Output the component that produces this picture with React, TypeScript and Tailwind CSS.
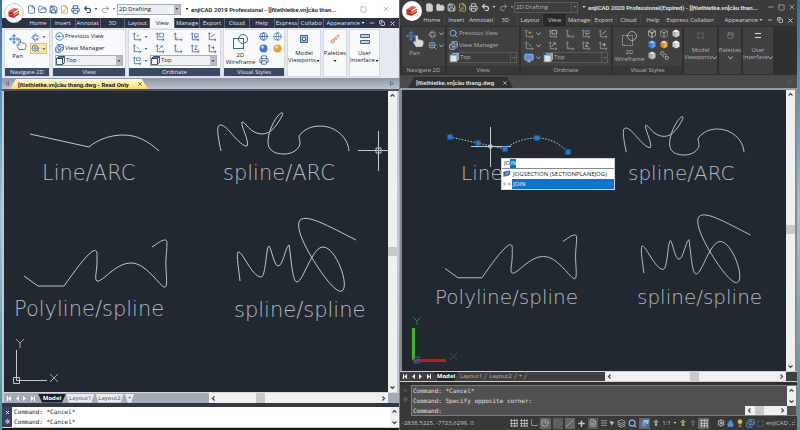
import React from "react";
import clsx from "clsx";
import {
    File, FolderOpen, Save, FilePen, Printer, Undo2, Redo2, Move, ZoomIn, CircleArrowLeft,
    Images, Minus, Square, X, Copy, Clock3, Settings, Lightbulb, Layers, Globe,
    MousePointer2, Search, Rotate3d, Lock, Monitor, PersonStanding, Maximize, Plus, SquareStack,
    Brush, PanelTop, FileText, Slash, Menu
} from "lucide-react";

type Theme = 'light' | 'dark';

interface ThemeProps {
    theme: Theme;
}

interface IconButtonProps {
    label: string;
    className?: string;
    children: React.ReactNode;
}

const IconButton: React.FC<IconButtonProps> = ({ label, className, children }) => (
    <button type="button" aria-label={label} className={clsx("flex shrink-0 items-center justify-center", className)}>
        {children}
    </button>
);

const Caret = () => (
    <svg width="4" height="2" viewBox="0 0 4 2" className="shrink-0"><path d="M.5 0h3L2 2z" fill="currentColor" /></svg>
);

const Chevron = () => (
    <svg width="5" height="4" viewBox="0 0 5 4" className="shrink-0"><path d="M.5.5l2 2.500 2-2.500" fill="none" stroke="currentColor" /></svg>
);

const DropMark: React.FC<ThemeProps> = ({ theme }) => theme === 'light' ? <Caret /> : <Chevron />;

const Logo: React.FC<ThemeProps> = ({ theme }) => (
    <div className={clsx(
        "absolute left-[2px] z-10 flex h-5 w-5 items-center justify-center rounded-full bg-white",
        theme === 'light' ? "top-[3px] border border-[#c3c7ce]" : "top-px"
    )}>
        <svg width="14" height="14" viewBox="0 0 14 14">
            <path d="M1.500 5.200L7 2l5 1-5.500 3.200z" fill="#ee5a3a" />
            <path d="M1.500 5.200l5 1v1.500L12 4.500v1.300L6.500 9l-5-1z" fill="#b92318" />
            <path d="M6.500 7.700L12 4.800v1.400L7 9z" fill="#e2452c" />
            <path d="M1.500 8l5 1L12 6.500v2L6.500 12l-5-1.500z" fill="#c92d1d" />
            <path d="M6.500 7.400L12 4.200M6.500 9.400l5.500-3" stroke="#fff" strokeWidth=".6" />
        </svg>
    </div>
);

/* Small coordinate system icons of the Ordinate panel */
const UcsIcon: React.FC<{ mark: string; color: string; theme: Theme }> = ({ mark, color, theme }) => (
    <svg width="10" height="10" viewBox="0 0 11 11" fill="none" stroke={theme === 'light' ? '#41658f' : '#9a9a9a'}>
        <path d="M2.500 1v7.500H10M1.200 2.500L2.500 1l1.300 1.500M8.500 7.200L10 8.500 8.500 9.800" strokeWidth=".9" />
        <path d={mark} stroke={color} />
    </svg>
);

const PanIcon: React.FC<ThemeProps> = ({ theme }) => (
    <span className="flex h-[17px]">
        <Move size={10} strokeWidth={2.5} className="text-[#3b86dd]" />
        <svg width="11" height="12" viewBox="0 0 11 12" className="-ml-[3px] mt-[4px]" fill={theme === 'light' ? '#ffffff' : '#dadada'} stroke={theme === 'light' ? '#41658f' : '#dadada'} strokeWidth=".8">
            <path d="M3 11.500L.8 7.500C.3 6.500 1.500 6 2.200 6.800L3 7.600V1.500C3 .5 4.500.5 4.500 1.500V5C5 4.300 6 4.500 6.200 5.200 7 4.600 8 5 8.100 5.800 9 5.300 10 5.800 10 6.800V9L9 11.500z" />
        </svg>
    </span>
);

const GridIcon = () => (
    <svg width="8" height="8" viewBox="0 0 8 8" stroke="currentColor" strokeWidth=".8"><path d="M1.500 0v8M4.500 0v8M7 0v8M0 1.500h8M0 4.500h8M0 7h8" /></svg>
);

const Ball: React.FC<{ color: string; shine: string }> = ({ color, shine }) => (
    <svg width="9" height="9" viewBox="0 0 9 9">
        <circle cx="4.500" cy="4.500" r="4" fill={color} />
        <circle cx="3.500" cy="3" r="1.800" fill={shine} />
    </svg>
);

const Cube: React.FC<{ top: string; left: string; right: string; stroke?: string }> = ({ top, left, right, stroke }) => (
    <svg width="8" height="9" viewBox="0 0 8 9" stroke={stroke ?? 'none'} strokeWidth=".7">
        <path d="M4 .5l3.500 1.700L4 4 .5 2.200z" fill={top} />
        <path d="M.5 2.200L4 4v4.500L.5 6.700z" fill={left} />
        <path d="M7.500 2.200L4 4v4.500l3.500-1.800z" fill={right} />
    </svg>
);

const Wireframe: React.FC<ThemeProps> = ({ theme }) => (
    <svg width="17" height="17" viewBox="0 0 17 17" fill="none" stroke={theme === 'light' ? '#41658f' : '#a5a5a5'}>
        <rect x="1.500" y="5.500" width="10" height="10" strokeDasharray={theme === 'light' ? undefined : '2 1'} />
        <circle cx="11" cy="6" r="4.500" />
    </svg>
);

const ViewCube: React.FC<ThemeProps> = ({ theme }) => (
    <svg width="9" height="9" viewBox="0 0 9 9" strokeWidth=".8" stroke={theme === 'light' ? '#1f3d66' : '#bbbbbb'}>
        <path d="M.5 2.500h6v6h-6z" fill={theme === 'light' ? '#ffffff' : '#e4e4e4'} />
        <path d="M.5 2.500l2-2h6l-2 2z" fill="#3b82d8" />
        <path d="M6.500 2.500l2-2v6l-2 2z" fill={theme === 'light' ? '#cfe0f5' : '#999999'} />
    </svg>
);

const tabs = {
    light: ['Home', 'Insert', 'Annotat', '3D', 'Layout', 'View', 'Manage', 'Export', 'Cloud', 'Help', 'Express', 'Collabo'],
    dark: ['Home', 'Insert', 'Annotati', '3D', 'Layout', 'View', 'Manage', 'Export', 'Cloud', 'Help', 'Express', 'Collabor.'],
};

const titles = {
    light: 'enjiCAD 2019 Professional - [[filethietke.vn]cầu than...',
    dark: 'enjiCAD 2020 Professional(Expired) - [[filethietke.vn]cầu than...',
};

const TitleBar: React.FC<ThemeProps> = ({ theme }) => {
    const light = theme === 'light';

    return (
        <div className={clsx("flex items-center pl-[25px] pr-px", light ? "h-[18px] bg-white text-[#222222]" : "h-[14px] bg-[#3b3b3b] text-[#e6e6e6]")}>
            <div className={clsx("flex shrink-0 items-center gap-[2px]", light ? "text-[#2b5b9b]" : "text-[#d0d0d0]")}>
                <IconButton label="New"><File size={9} fill={light ? 'none' : 'currentColor'} /></IconButton>
                <IconButton label="Open"><FolderOpen size={9} fill={light ? 'none' : 'currentColor'} /></IconButton>
                <IconButton label="Save"><Save size={9} strokeWidth={2.5} /></IconButton>
                <IconButton label="Save as" className="text-[#d9a03c]"><FilePen size={9} strokeWidth={2.5} /></IconButton>
                <IconButton label="Print"><Printer size={9} strokeWidth={2.5} /></IconButton>
                <IconButton label="Undo" className="gap-[2px] pl-px"><Undo2 size={9} strokeWidth={3} /><Caret /></IconButton>
                <IconButton label="Redo" className="gap-[2px] pl-px text-[#8d97a5]"><Redo2 size={9} strokeWidth={2.5} /><Caret /></IconButton>
            </div>
            <Combo theme={theme} label="Workspace" value="2D Drafting" className={clsx("w-16 shrink-0", light && "ml-px")} />
            <span className="ml-1 mr-[2px]"><Caret /></span>
            <h1 className="min-w-0 flex-1 overflow-hidden whitespace-nowrap font-['Roboto','Noto_Sans',sans-serif] text-[6px] font-semibold">{titles[theme]}</h1>
            <div className={clsx("flex shrink-0 items-center", light ? "gap-[15px] pr-[8px] text-[#9a9a9a]" : "gap-[3px] text-[#cccccc]")}>
                {!light && <IconButton label="Minimize"><Minus size={8} /></IconButton>}
                <IconButton label="Maximize"><Square size={7} /></IconButton>
                <IconButton label="Close"><X size={8} /></IconButton>
            </div>
        </div>
    );
}

const Combo: React.FC<{ theme: Theme; label: string; value: string; className?: string; children?: React.ReactNode }> = ({ theme, label, value, className, children }) => {
    const light = theme === 'light';

    return (
        <div className={clsx(
            "flex h-[11px] items-center border",
            light ? "border-[#a9adb5] bg-[#eef0f3] text-[#222222]" : "border-[#5a5a5a] bg-[#3e3e3e] text-[#b5b5b5]",
            className
        )}>
            {children}
            <select aria-label={label} className="h-full min-w-0 flex-1 appearance-none bg-transparent pl-px text-[6px] leading-[9px]">
                <option>{value}</option>
            </select>
            <span className={clsx("flex h-full w-[6px] items-center justify-center", light ? "bg-[#b9bcc2] text-[#444444]" : "border-l border-[#555555] text-[#777777]")}>
                <Caret />
            </span>
        </div>
    );
}

const RibbonTabs: React.FC<ThemeProps> = ({ theme }) => {
    const light = theme === 'light';

    return (
        <nav className={clsx("flex shrink-0 pl-6 text-[6px]", light ? "h-[10px] bg-[#2d3345] text-[#dfe3ec]" : "h-[12px] bg-[#3b3b3b] text-[#d4d4d4]")}>
            <div className={clsx("flex shrink-0", light ? "w-4/5" : "w-[79%] -ml-1")}>
                {tabs[theme].map((tab) => (
                    <button
                        key={tab}
                        type="button"
                        className={clsx(
                            "flex-1 basis-0 overflow-hidden whitespace-nowrap",
                            light ? "border-r border-[#596178]" : "border-r border-[#474747]",
                            tab === 'View' && (light ? "bg-[#f3f5f9] text-[#222222]" : "bg-[#292929]")
                        )}
                    >
                        {tab}
                    </button>
                ))}
            </div>
            <div className="flex flex-1 items-center justify-end gap-1 pr-[3px]">
                <button type="button" className="flex items-center gap-px">Appearance<Caret /></button>
                <IconButton label="Minimize drawing"><Minus size={6} strokeWidth={3} /></IconButton>
                <IconButton label="Restore drawing"><Copy size={6} strokeWidth={3} /></IconButton>
                <IconButton label="Close drawing"><X size={7} strokeWidth={3} /></IconButton>
            </div>
        </nav>
    );
}

interface PanelProps extends ThemeProps {
    name?: string;
    className?: string;
    children: React.ReactNode;
}

const Panel: React.FC<PanelProps> = ({ theme, name, className, children }) => {
    const light = theme === 'light';

    return (
        <section className={clsx("flex shrink-0 flex-col", light ? "border border-[#d3d8e2] bg-[#f8f9fb]" : "bg-[#414141]", className)}>
            <div className="flex min-h-0 flex-1">{children}</div>
            {name && (
                <h2 className={clsx("h-[8px] text-center text-[6px] leading-[8px]", light ? "bg-[#3b4963] text-[#e4e8f0]" : "bg-[#383838] text-[#b4b4b4]")}>
                    {name}
                </h2>
            )}
        </section>
    );
}

const marks = [
    ['M5 4h3M6.500 2.500v3', 'M4.500 1.500h5v4h-5z', 'M5 6L3.500 7.500', 'M5 2h4v3H5zM5 6.500h3', 'M4 6l5-4'],
    ['M5 3l3 3', 'M4 6l4-4M6 2h2v2', 'M5 6L4 7', 'M5 2h3L5 6h3', 'M4.500 4h4M7 2v4'],
];

const markColor = (theme: Theme, row: number, col: number) => {
    if (row + col === 0) {
        return '#e3992e';
    }
    if (theme === 'light') {
        return '#4a86d0';
    }
    return row === 0 && col === 3 ? '#5f9fe6' : '#b5b5b5';
}

const Ribbon: React.FC<ThemeProps> = ({ theme }) => {
    const light = theme === 'light';
    const accent = light ? 'text-[#3b6db3]' : 'text-[#a9a9a9]';

    return (
        <div className={clsx("flex shrink-0 gap-[2px] pl-[2px] text-[6px] leading-[7px]", light ? "h-[50px] bg-[#e6e9f0] py-px text-[#222222]" : "h-[49px] bg-[#303030] py-px text-[#b4b4b4]")}>
            <Panel theme={theme} name="Navigate 2D" className={light ? "w-[46px]" : "w-[43px]"}>
                <button type="button" className="flex w-[25px] flex-col items-center pt-1">
                    <PanIcon theme={theme} />
                    <span className="mt-[2px]">Pan</span>
                </button>
                <div className={clsx("flex flex-col gap-px pt-[2px]", accent)}>
                    <IconButton label="Orbit" className="h-[10px] w-[17px] gap-[2px]"><Rotate3d size={9} /><DropMark theme={theme} /></IconButton>
                    <IconButton label="Zoom" className={clsx("h-[11px] w-[17px] gap-[2px]", light && "border border-[#e3c26a] bg-[#fbe6a5]")}><ZoomIn size={9} strokeWidth={2.5} className={light ? "text-[#3b78cc]" : "text-[#7db4f0]"} /><DropMark theme={theme} /></IconButton>
                </div>
            </Panel>

            <Panel theme={theme} name="View" className={light ? "w-[74px]" : "w-[72px]"}>
                <div className="flex min-w-0 flex-1 flex-col gap-px px-[2px] pt-px">
                    <button type="button" className="flex h-[11px] items-center gap-px">
                        {light ? <CircleArrowLeft size={9} className="text-[#2f6fc0]" /> : <Search size={9} strokeWidth={2.5} className="text-[#7db4f0]" />}
                        Previous View
                    </button>
                    <button type="button" className="flex h-[11px] items-center gap-px">
                        <Images size={9} strokeWidth={2.5} className={light ? "text-[#2b5b9b]" : "text-[#a9c8ea]"} />
                        View Manager
                    </button>
                    <Combo theme={theme} label="View" value="Top"><ViewCube theme={theme} /></Combo>
                </div>
            </Panel>

            <Panel theme={theme} name="Ordinate" className={light ? "w-[93px]" : "w-[90px]"}>
                <div className={clsx("flex flex-1 flex-col gap-px px-[3px] pt-px", accent)}>
                    {marks.map((row, i) => (
                        <div key={i} className="flex h-[11px] items-center justify-between">
                            {row.map((mark, j) => (
                                <IconButton key={mark} label={`UCS ${i * 5 + j + 1}`} className="gap-[2px]">
                                    <UcsIcon mark={mark} theme={theme} color={markColor(theme, i, j)} />
                                    {j === 0 && <DropMark theme={theme} />}
                                </IconButton>
                            ))}
                        </div>
                    ))}
                    <div className="flex items-center">
                        <IconButton label="UCS icon" className="gap-[2px]">
                            {light ? <UcsIcon mark="M5 2h4v3H5z" theme={theme} color="#4a86d0" /> : <Monitor size={10} fill="#4b8fe0" className="text-[#a9c8ea]" />}
                            <DropMark theme={theme} />
                        </IconButton>
                        <Combo theme={theme} label="UCS" value="Top" className="ml-[2px] min-w-0 flex-1"><ViewCube theme={theme} /></Combo>
                    </div>
                </div>
            </Panel>

            <Panel theme={theme} name="Visual Styles" className={light ? "w-[62px]" : "w-[69px]"}>
                <button type="button" className="flex w-[33px] flex-col items-center pt-[3px]">
                    <Wireframe theme={theme} />
                    <span className="mt-[2px]">2D</span>
                    <span>Wireframe</span>
                </button>
                {light ? (
                    <div className="grid flex-1 auto-rows-[12px] grid-cols-2 place-items-center text-[#2b5b9b]">
                        <IconButton label="3D wireframe"><Globe size={9} /></IconButton>
                        <IconButton label="3D hidden"><Globe size={9} strokeWidth={1.5} /></IconButton>
                        <IconButton label="Realistic"><Ball color="#3f76d6" shine="#a8c8f8" /></IconButton>
                        <IconButton label="Conceptual"><Ball color="#ee9a3a" shine="#fbd3a0" /></IconButton>
                        <IconButton label="Manage styles"><Printer size={10} /></IconButton>
                    </div>
                ) : (
                    <div className="grid flex-1 auto-rows-[11px] grid-cols-3 place-items-center pt-px">
                        <IconButton label="3D wireframe"><Cube top="none" left="none" right="none" stroke="#bdbdbd" /></IconButton>
                        <IconButton label="3D hidden"><Cube top="none" left="none" right="none" stroke="#999999" /></IconButton>
                        <IconButton label="Flat"><Cube top="#f1f1f1" left="#b8b8b8" right="#d2d2d2" /></IconButton>
                        <IconButton label="Realistic"><Cube top="#8cc0ff" left="#2b7ff0" right="#4e9bfa" /></IconButton>
                        <IconButton label="Conceptual"><Cube top="#ffd08a" left="#e58a1c" right="#f5a942" /></IconButton>
                        <IconButton label="Shaded"><Cube top="#ffffff" left="#c9c9c9" right="#e4e4e4" /></IconButton>
                        <IconButton label="Gray"><Cube top="#e0e0e0" left="#a8a8a8" right="#c4c4c4" /></IconButton>
                        <IconButton label="Manage styles"><SquareStack size={9} className="text-[#a9c8ea]" /></IconButton>
                    </div>
                )}
            </Panel>

            <BigButton theme={theme} lines={['Model', 'Viewports']} className={light ? "w-[34px]" : "w-[33px]"}>
                {light ? (
                    <svg width="8" height="8" viewBox="0 0 8 8" fill="#ffffff" stroke="#41658f"><path d="M.5.5h7v7h-7z" fill="#a9c4e8" /><path d="M2.500 2.500h3v3h-3z" /></svg>
                ) : <Maximize size={7} />}
            </BigButton>
            <BigButton theme={theme} lines={['Palettes']} className={light ? "w-[24px]" : "w-[22px]"}>
                {light ? <Brush size={10} className="text-[#c9752c]" /> : <PanelTop size={7} />}
            </BigButton>
            <BigButton theme={theme} lines={['User', 'Interface']} className={light ? "w-[31px]" : "w-[30px]"}>
                {light ? (
                    <svg width="10" height="10" viewBox="0 0 10 10" fill="#b9d0ee" stroke="#41658f"><path d="M.5.5h9v3h-9zM.5 6.500h9v3h-9z" /></svg>
                ) : (
                    <svg width="8" height="7" viewBox="0 0 8 7" stroke="#dddddd"><path d="M1 1.500h6M1 5.500h6" /></svg>
                )}
            </BigButton>
        </div>
    );
}

const BigButton: React.FC<{ theme: Theme; lines: string[]; className?: string; children: React.ReactNode }> = ({ theme, lines, className, children }) => (
    <Panel theme={theme} className={className}>
        <button type="button" className="flex w-full flex-col items-center pt-[3px]">
            <span className={clsx("flex h-[11px] items-center", theme === 'light' ? "text-[#41658f]" : "text-[#999999]")}>{children}</span>
            <span className="mt-[6px]">{lines[0]}</span>
            <span className="flex min-h-[7px] items-center">{lines[1]}<DropMark theme={theme} /></span>
        </button>
    </Panel>
);

const DocumentTabs: React.FC<ThemeProps> = ({ theme }) => {
    const light = theme === 'light';

    return (
        <div className={clsx(
            "flex shrink-0 items-end border-b-2 pl-[2px]",
            light ? "h-[13px] border-[#4a5263] bg-linear-to-b from-[#8d96a5] to-[#bcc3cd]" : "h-[15px] border-[#9b9b9b] bg-[#4a4a4a]"
        )}>
            <IconButton label="Previous tabs" className={clsx("h-full w-[6px]", light ? "text-[#5d6675]" : "text-[#4a4a4a]")}>
                <svg width="4" height="5" viewBox="0 0 4 5" fill="none" stroke="currentColor" strokeWidth=".8"><path d="M3.500.5v4l-3-2z" /></svg>
            </IconButton>
            <div className={clsx(
                "flex items-center gap-2 pl-[8px] pr-[5px] font-['Roboto','Noto_Sans',sans-serif] text-[6px] font-bold [clip-path:polygon(6px_0,calc(100%-6px)_0,100%_100%,0_100%)]",
                light ? "h-[10px] bg-linear-to-b from-[#fffbd6] to-[#f7dc62] text-[#222222]" : "h-[11px] bg-[#303030] text-[#dedede]"
            )}>
                <span className="whitespace-nowrap">{light ? '[filethietke.vn]cầu thang.dwg - Read Only' : '[filethietke.vn]cầu thang.dwg'}</span>
                <IconButton label="Close tab"><X size={6} strokeWidth={2.5} /></IconButton>
            </div>
            <IconButton label="Next tabs" className={clsx("ml-auto mr-1 h-full w-[6px]", light ? "text-[#5d6675]" : "text-[#5c5c5c]")}>
                <svg width="4" height="5" viewBox="0 0 4 5" fill="none" stroke="currentColor" strokeWidth=".8"><path d="M.5.5v4l3-2z" /></svg>
            </IconButton>
        </div>
    );
}

/* Curves are shared by both drawings, in the coordinates of the first one */
const line = 'M30 134L89 147C97 140 110 135 123 135C137 135 148 141 159 151';
const curves = [
    'M24 276L38 286H64C74 272 86 255 93 251C98 249 97 253 97 262C97 272 94 279 97 281C102 283 115 263 131 263C146 263 158 284 164 287C169 289 165 270 166 258C167 244 168 240 165 240C161 240 157 244 152 247',
    'M221 151C219 142 217 131 218 127C220 122 226 127 231 133C237 140 244 147 247 146C250 142 240 124 242 122C245 121 250 134 262 134C272 134 278 123 282 116C284 111 281 112 277 117C272 124 268 134 268 142C268 150 274 154 284 154C293 154 299 149 300 144C300 141 299 138 299 136C304 129 312 126 320 126C335 126 348 137 349 151',
    'M240 281C239 270 236 255 238 252C242 250 252 277 261 277C266 277 266 246 269 246C271 247 274 266 278 266C283 266 285 248 289 245C291 255 292 282 297 282C303 282 312 247 323 247C336 247 350 286 342 291C336 294 321 273 312 258C303 243 297 229 299 222C303 211 330 227 356 240',
];

const LightDrawing = () => (
    <svg viewBox="4 91 384 300" preserveAspectRatio="xMinYMin meet" className="h-full w-full font-['DejaVu_Sans',sans-serif]" fill="none" stroke="#c3cad0">
        <path d={line} />
        {curves.map((d) => <path key={d} d={d} />)}
        <g fill="#b4bcc3" stroke="none" className="text-[21px] font-extralight">
            <text x="42" y="180">Line/ARC</text>
            <text x="223" y="180">spline/ARC</text>
            <text x="14" y="316">Polyline/spline</text>
            <text x="234" y="317">spline/spline</text>
        </g>
        <path d="M358 150.500h30M378.500 131v40M376 148h5v5h-5z" />
        <path d="M16.500 350v30.500H47M13.500 377.500h6v6h-6z" />
        <path d="M16 339l4 4 4-4M20 343v5M50 374l8 8M58 374l-8 8" strokeWidth=".8" />
    </svg>
);

const grips = [[450, 137], [478, 143], [505, 149], [537, 138], [568, 152]];

const DarkDrawing = () => (
    <svg viewBox="402 90 384 281" preserveAspectRatio="xMinYMin meet" className="h-full w-full font-['DejaVu_Sans',sans-serif]" fill="none" stroke="#c3cad0">
        <g transform="translate(423 11.800) scale(.92 .93)">
            {curves.map((d) => <path key={d} d={d} />)}
        </g>
        <path d="M450 137L505 149C513 142 525 138 537 138C549 138 559 143 568 152" strokeDasharray="1.500 1.500" />
        <g fill="#b4bcc3" stroke="none" className="text-[20px] font-extralight">
            <text x="461" y="180">Line</text>
            <text x="628" y="180">spline/ARC</text>
            <text x="435" y="304">Polyline/spline</text>
            <text x="637" y="304">spline/spline</text>
        </g>
        <path d="M471 146.500h40M490.500 127v40M489 145h3v3h-3z" />
        {grips.map(([x, y]) => <rect key={x} x={x - 2} y={y - 2} width="4" height="4" fill="#1f7ad8" stroke="#1f7ad8" />)}
        <path d="M413.500 328v32" stroke="#43b51f" strokeWidth="3" />
        <path d="M413 360.500h33" stroke="#d01515" strokeWidth="3" />
        <path d="M413 317l4 4 4-4M417 321v4" stroke="#2e7d32" />
        <path d="M450 353l7 7M457 353l-7 7" stroke="#b01c1c" />
        <path d="M414 357h6l-6 6h6" stroke="#2f62c4" />
    </svg>
);

const Suggestions = () => (
    <div className="absolute left-[99px] top-[68px] w-[114px] border border-[#d4d4d4] bg-white text-[6px] leading-[10px] text-[#222222]">
        <label className="flex h-[10px] items-center border-b border-[#888888] pl-[2px] leading-[9px]">
            <span>JO</span><span className="bg-[#0a74d0] text-white">IN</span>
            <input aria-label="Command name" className="h-[9px] min-w-0 flex-1 outline-none" />
        </label>
        <ul>
            <li className="flex h-[10px] items-center">
                <span className="flex w-[10px] justify-center">
                    <svg width="8" height="8" viewBox="0 0 8 8"><path d="M1 2l6-1-1 4-4 1z" fill="#6c94c8" stroke="#2d4f86" strokeWidth=".8" /><path d="M1 2v5" stroke="#2d4f86" /></svg>
                </span>
                <span className="pl-px">JOGSECTION (SECTIONPLANEJOG)</span>
            </li>
            <li className="flex h-[10px] items-center">
                <span className="flex w-[10px] justify-center text-[#999999]">
                    <svg width="8" height="4" viewBox="0 0 8 4" stroke="currentColor"><path d="M0 2h3M5 2h3M2 .5v3M6 .5v3" strokeWidth=".8" /></svg>
                </span>
                <span className="flex-1 bg-[#0a74d0] pl-px text-white">JOIN</span>
            </li>
        </ul>
    </div>
);

const Arrow: React.FC<{ d: string }> = ({ d }) => (
    <svg width="5" height="5" viewBox="0 0 5 5" fill="none" stroke="#444444" strokeWidth="1.200"><path d={d} /></svg>
);

const up = 'M.5 3.500l2-2 2 2';
const down = 'M.5 1.500l2 2 2-2';
const left = 'M3.500.5l-2 2 2 2';
const right = 'M1.500.5l2 2-2 2';

const VerticalScroll: React.FC<{ thumb?: string }> = ({ thumb }) => (
    <div className="flex w-[9px] shrink-0 flex-col items-center bg-[#f0f0f0] py-[2px]">
        <IconButton label="Scroll up"><Arrow d={up} /></IconButton>
        <div className="flex w-full flex-1 flex-col">
            {thumb && <><div className={thumb} /><div className="h-[9px] w-full bg-[#c9c9c9]" /></>}
        </div>
        <IconButton label="Scroll down"><Arrow d={down} /></IconButton>
    </div>
);

const HorizontalScroll: React.FC<{ thumb: string; className?: string }> = ({ thumb, className }) => (
    <div className={clsx("flex items-center bg-[#f0f0f0] px-[2px]", className)}>
        <IconButton label="Scroll left"><Arrow d={left} /></IconButton>
        <div className="flex h-full flex-1">
            <div className={thumb} />
            <div className="h-full w-[9px] bg-[#c9c9c9]" />
        </div>
        <IconButton label="Scroll right"><Arrow d={right} /></IconButton>
    </div>
);

const LayoutTabs: React.FC<ThemeProps> = ({ theme }) => {
    const light = theme === 'light';

    return (
        <div className={clsx("flex h-[11px] shrink-0 items-stretch", light ? "border-t border-[#d5d9df] bg-[#a4abb6]" : "border-y border-[#d0d0d0] bg-[#3f3f3f]")}>
            <div className="flex w-[205px] shrink-0 items-center text-[6px] leading-[9px]">
                <div className="flex w-[34px] items-center justify-between px-[3px] text-white">
                    <IconButton label="First layout"><svg width="4" height="5" viewBox="0 0 4 5" fill="currentColor"><path d="M0 0h1v5H0zM4 0v5L1 2.500z" /></svg></IconButton>
                    <IconButton label="Previous layout"><svg width="3" height="5" viewBox="0 0 3 5" fill="currentColor"><path d="M3 0v5L0 2.500z" /></svg></IconButton>
                    <IconButton label="Next layout"><svg width="3" height="5" viewBox="0 0 3 5" fill="currentColor"><path d="M0 0v5l3-2.500z" /></svg></IconButton>
                    <IconButton label="Last layout"><svg width="4" height="5" viewBox="0 0 4 5" fill="currentColor"><path d="M0 0v5l3-2.500zM3 0h1v5H3z" /></svg></IconButton>
                </div>
                <button type="button" className={clsx("font-bold text-white [clip-path:polygon(0_0,100%_0,calc(100%-4px)_100%,4px_100%)]", light ? "w-7 bg-[#1b1f25]" : "w-6 bg-[#262626]")}>Model</button>
                {['Layout1', 'Layout2', '+'].map((name) => (
                    <React.Fragment key={name}>
                        <button type="button" className={clsx("[clip-path:polygon(0_0,100%_0,calc(100%-3px)_100%,3px_100%)]", light ? "mr-px bg-[#e8eaed] px-[3px] text-[#555555]" : "px-[2px] text-[#b5b5b5]")}>{name}</button>
                        {!light && <svg width="3" height="7" viewBox="0 0 3 7" stroke="#777777"><path d="M3 0L0 7" /></svg>}
                    </React.Fragment>
                ))}
            </div>
            <HorizontalScroll thumb={light ? "w-[24%]" : "w-[47%]"} className="flex-1" />
            <div className="w-[11px]" />
        </div>
    );
}

const LightWindow = () => (
    <div className="relative flex min-w-0 flex-1 flex-col bg-[#303848]">
        <Logo theme="light" />
        <TitleBar theme="light" />
        <RibbonTabs theme="light" />
        <Ribbon theme="light" />
        <DocumentTabs theme="light" />
        <div className="flex min-h-0 flex-1 border-x-2 border-[#c4c9d0] bg-[#212830]">
            <div className="min-w-0 flex-1"><LightDrawing /></div>
            <VerticalScroll thumb="basis-[52%]" />
        </div>
        <div className="border-l-2 border-[#c4c9d0]"><LayoutTabs theme="light" /></div>
        <div className="mt-1 flex h-5 shrink-0">
            <div className="flex w-[10px] flex-col items-center justify-evenly bg-[#36415a] text-white">
                <IconButton label="Close command line"><X size={5} strokeWidth={4} /></IconButton>
                <IconButton label="Command options"><Settings size={5} strokeWidth={3} /></IconButton>
            </div>
            <div className="flex-1 bg-white pl-[2px] font-['DejaVu_Sans_Mono',monospace] text-[6px] leading-[10px] text-[#222222]">
                <p>Command: *Cancel*</p>
                <p>Command: *Cancel*</p>
            </div>
            <VerticalScroll />
        </div>
        <div className="h-[3px] shrink-0 border-t border-[#cccccc] bg-[#15181c]" />
    </div>
);

const StatusBar = () => (
    <footer className="flex h-[14px] shrink-0 items-center bg-[#383838] px-[2px] text-[6px] text-[#c4c4c4]">
        <span className="w-[108px] whitespace-nowrap">-2838.5225, -7723.6299, 0</span>
        <div className="flex flex-1 items-center justify-between">
            <IconButton label="Snap"><GridIcon /></IconButton>
            <IconButton label="Grid"><GridIcon /></IconButton>
            <IconButton label="Ortho"><svg width="8" height="8" viewBox="0 0 8 8" fill="none" stroke="#8a8a8a"><path d="M1.500 0v6.500H8" /></svg></IconButton>
            <IconButton label="Polar" className="h-[11px] w-[11px] bg-[#666666]"><Clock3 size={8} /></IconButton>
            <IconButton label="Object snap" className="h-[11px] w-[10px] bg-[#5c5c5c] text-[#777777]"><Square size={7} /></IconButton>
            <IconButton label="Tracking" className="h-[11px] w-[10px] bg-[#666666]"><Slash size={8} /></IconButton>
            <IconButton label="Dynamic input"><Plus size={9} strokeWidth={4} /></IconButton>
            <IconButton label="Line weight" className="h-[11px] w-[10px] bg-[#5c5c5c]"><FileText size={8} /></IconButton>
            <IconButton label="Properties"><Menu size={8} /></IconButton>
            <IconButton label="Selection"><MousePointer2 size={6} fill="currentColor" /></IconButton>
            <IconButton label="Layers"><Layers size={9} /></IconButton>
            <IconButton label="Find" className="text-[#8ebcf0]"><Search size={9} strokeWidth={3} /></IconButton>
            <IconButton label="Model space" className="h-[11px] w-[11px] bg-[#666666]">
                <svg width="8" height="7" viewBox="0 0 8 7"><path d="M2.500 0H8L7 4H1.500z" fill="#8cc0ff" /><path d="M1 2.500h5l-1 4H0z" fill="#4b96ee" /></svg>
            </IconButton>
            <IconButton label="Annotation scale" className="gap-[2px]"><PersonStanding size={8} strokeWidth={3} />1:1<Caret /></IconButton>
            <IconButton label="Annotation visibility"><PersonStanding size={8} strokeWidth={3} className="text-[#e3c084]" /></IconButton>
            <IconButton label="Auto scale" className="text-[#888888]"><PersonStanding size={8} /></IconButton>
            <IconButton label="Transparency" className="h-[11px] w-[11px] bg-[#666666]"><GridIcon /></IconButton>
            <span className="w-1" />
            <IconButton label="Settings"><Settings size={8} strokeWidth={3} /></IconButton>
            <IconButton label="Lock" className="text-[#4b96ee]"><Lock size={7} fill="#4b96ee" /></IconButton>
            <IconButton label="Isolate" className="text-[#f3b647]"><Lightbulb size={8} fill="#f3b647" /></IconButton>
            <IconButton label="Monitor" className="text-[#6faaf0]"><Images size={9} /></IconButton>
            <IconButton label="Clean screen" className="text-[#888888]"><Maximize size={7} /></IconButton>
            <span>enjiCAD</span>
            <svg width="5" height="6" viewBox="0 0 5 6" fill="#999999"><path d="M4 0h1v1H4zM4 2h1v1H4zM2 2h1v1H2zM4 4h1v1H4zM2 4h1v1H2zM0 4h1v1H0z" /></svg>
        </div>
    </footer>
);

const DarkWindow = () => (
    <div className="relative flex min-w-0 flex-1 flex-col bg-[#303030]">
        <Logo theme="dark" />
        <TitleBar theme="dark" />
        <RibbonTabs theme="dark" />
        <Ribbon theme="dark" />
        <DocumentTabs theme="dark" />
        <div className="flex min-h-0 flex-1 border-x-2 border-[#8a8a8a] bg-[#212830]">
            <div className="relative min-w-0 flex-1">
                <DarkDrawing />
                <Suggestions />
            </div>
            <VerticalScroll thumb="basis-[48%]" />
        </div>
        <LayoutTabs theme="dark" />
        <div className="mt-[3px] flex h-[31px] shrink-0 bg-[#505050]">
            <div className="flex w-[11px] flex-col items-center gap-1 bg-[#383838] pt-[3px] text-[#888888]">
                <IconButton label="Close command line"><X size={5} /></IconButton>
                <IconButton label="Command options"><Settings size={5} /></IconButton>
            </div>
            <div className="flex flex-1 flex-col border border-[#7c7c7c] font-['DejaVu_Sans_Mono',monospace] text-[6px] text-[#e0e0e0]">
                <div className="flex min-h-0 flex-1">
                    <div className="flex-1 pl-px leading-[10px]">
                        <p>Command: *Cancel*</p>
                        <p>Command: Specify opposite corner:</p>
                    </div>
                    <VerticalScroll />
                </div>
                <label className="flex h-[9px] items-center pl-px leading-[9px]">
                    Command:
                    <input className="h-full min-w-0 flex-1 bg-transparent pl-1 outline-none" />
                    <HorizontalScroll thumb="w-[3px]" className="mr-[9px] h-full w-[42px]" />
                </label>
            </div>
        </div>
        <StatusBar />
    </div>
);

const App = () => {
    return (
        <main className="flex h-screen gap-px bg-linear-to-b from-[#2f6fae] via-[#9cc3d8] to-[#4f8f95] pl-[2px] pr-[3px] font-['Open_Sans','Noto_Sans',sans-serif]">
            <LightWindow />
            <DarkWindow />
        </main>
    );
}

export default App;
